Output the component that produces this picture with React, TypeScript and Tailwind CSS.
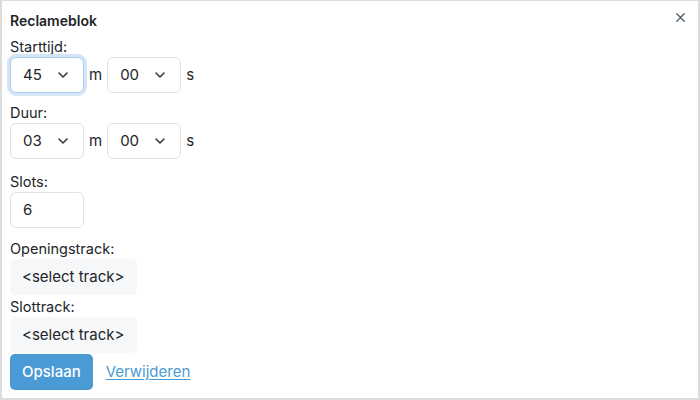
import React from "react";

const font = { fontFamily: "Inter, 'Noto Sans', sans-serif" };

function Chevron() {
  return (
    <svg width="10" height="6" viewBox="0 0 10 6" fill="none" className="shrink-0">
      <path d="M1 1 L5 5 L9 1" stroke="#343a40" strokeWidth="1.6" strokeLinecap="round" strokeLinejoin="round" />
    </svg>
  );
}

function Select({ value, focused }: { value: string; focused?: boolean }) {
  return (
    <div
      className={
        "flex h-[36px] w-[74px] items-center justify-between rounded-[6px] border bg-white pl-[12px] pr-[15px] text-[15px] text-[#212529] " +
        (focused ? "border-[#a9cdef] shadow-[0_0_0_3px_#d3e5f6]" : "border-[#dee2e6]")
      }
    >
      <span>{value}</span>
      <Chevron />
    </div>
  );
}

function TimeRow({ m, s, focused }: { m: string; s: string; focused?: boolean }) {
  return (
    <div className="flex items-center">
      <Select value={m} focused={focused} />
      <span className="mx-[5px] text-[15px] text-[#212529]">m</span>
      <Select value={s} />
      <span className="mx-[5px] text-[15px] text-[#212529]">s</span>
    </div>
  );
}

function Label({ children }: { children: React.ReactNode }) {
  return <div className="h-[21px] text-[14.5px] leading-[21px] text-[#212529]">{children}</div>;
}

export default function App() {
  return (
    <div style={font} className="h-[400px] w-[700px] overflow-hidden bg-white">
      <div className="relative h-full w-full border-l-2 border-r-2 border-b-2 border-t border-[#dcdcdc] pl-[8px] pt-[9px]">
        <div className="h-[21px] text-[14px] font-semibold leading-[21px] text-[#212529]">Reclameblok</div>
        <button className="absolute right-[13px] top-[12px] flex h-[9px] w-[9px] items-center justify-center">
          <svg width="9" height="9" viewBox="0 0 9 9">
            <path d="M0.8 0.8 L8.2 8.2 M8.2 0.8 L0.8 8.2" stroke="#5b6773" strokeWidth="1.5" strokeLinecap="round" />
          </svg>
        </button>

        <div className="mt-[5px]">
          <Label>Starttijd:</Label>
          <TimeRow m="45" s="00" focused />
        </div>

        <div className="mt-[9px]">
          <Label>Duur:</Label>
          <TimeRow m="03" s="00" />
        </div>

        <div className="mt-[12px]">
          <Label>Slots:</Label>
          <div className="flex h-[36px] w-[74px] items-center rounded-[6px] border border-[#dee2e6] bg-white pl-[12px] text-[15px] text-[#212529]">
            6
          </div>
        </div>

        <div className="mt-[10px]">
          <Label>Openingstrack:</Label>
          <div className="flex h-[36px] w-[127px] items-center rounded-[6px] bg-[#f6f7f9] px-[12px] text-[15px] text-[#212529]">
            &lt;select track&gt;
          </div>
        </div>

        <div className="mt-[1px]">
          <Label>Slottrack:</Label>
          <div className="flex h-[36px] w-[127px] items-center rounded-[6px] bg-[#f6f7f9] px-[12px] text-[15px] text-[#212529]">
            &lt;select track&gt;
          </div>
        </div>

        <div className="mt-[1px] flex items-center">
          <div className="flex h-[36px] items-center rounded-[5px] bg-[#4a9ad5] px-[12px] text-[15px] font-medium text-white">
            Opslaan
          </div>
          <a className="ml-[13px] text-[15px] text-[#4a9ad5] underline underline-offset-2">Verwijderen</a>
        </div>
      </div>
    </div>
  );
}
